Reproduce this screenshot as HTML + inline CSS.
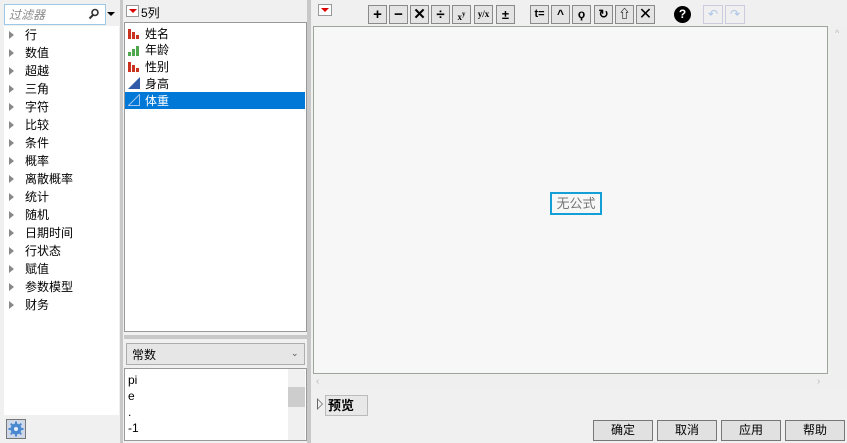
<!DOCTYPE html>
<html><head><meta charset="utf-8"><style>
*{box-sizing:border-box;margin:0;padding:0}
body{width:847px;height:443px;background:#f0f0f0;position:relative;overflow:hidden;font-family:"Liberation Sans","Noto Sans CJK SC",sans-serif;font-size:12px;color:#000}
.a{position:absolute}
.li{position:absolute;left:25px;font-size:12px;line-height:16px}
.tri{position:absolute;left:9px;width:0;height:0;border-left:5px solid #888;border-top:4px solid transparent;border-bottom:4px solid transparent}
.tb{position:absolute;top:5px;width:19px;height:19px;border:1px solid #8a8a8a;background:#e4e4e4;font-weight:bold;text-align:center;line-height:17px;font-size:15px}
.btn{position:absolute;top:420px;width:60px;height:21px;border:1px solid #777;background:#e1e1e1;text-align:center;line-height:19px;font-size:12px}
</style></head><body>
<!-- left panel -->
<div class="a" style="left:4px;top:4px;width:102px;height:21px;border:1px solid #9cc9e6;background:#fff"></div>
<div class="a" style="left:9px;top:6px;color:#888;font-style:italic;font-size:12px">过滤器</div>
<svg class="a" style="left:88px;top:8px" width="12" height="12"><circle cx="7" cy="4.5" r="3" fill="none" stroke="#333" stroke-width="1.6"/><line x1="5" y1="7" x2="1.5" y2="10.5" stroke="#333" stroke-width="2"/></svg>
<div class="a" style="left:107px;top:12px;border-left:4px solid transparent;border-right:4px solid transparent;border-top:4px solid #000"></div>
<div class="a" style="left:4px;top:26px;width:115px;height:389px;background:#fff"></div>
<div class="a" style="left:120px;top:0;width:3px;height:443px;background:#c8c8c8"></div>
<div id="ll"></div>
<div class="a" style="left:6px;top:419px;width:20px;height:20px;border:1px solid #777;background:#cfd8e8"></div>
<svg class="a" style="left:8px;top:421px" width="16" height="16" viewBox="0 0 16 16"><g fill="#4a88d0"><circle cx="8" cy="8" r="5.5"/><rect x="7" y="0.5" width="2" height="15"/><rect x="0.5" y="7" width="15" height="2"/><rect x="7" y="0.5" width="2" height="15" transform="rotate(45 8 8)"/><rect x="7" y="0.5" width="2" height="15" transform="rotate(-45 8 8)"/></g><circle cx="8" cy="8" r="2" fill="#e8f0fa"/></svg>
<!-- middle panel -->
<div class="a" style="left:126px;top:5px;width:13px;height:12px;border:1px solid #999;background:#fff"></div>
<div class="a" style="left:129px;top:9px;border-left:4px solid transparent;border-right:4px solid transparent;border-top:4px solid #d00"></div>
<div class="a" style="left:141px;top:4px">5列</div>
<div class="a" style="left:124px;top:22px;width:183px;height:310px;border:1px solid #999;background:#fff"></div>
<svg class="a" style="left:128px;top:27px" width="12" height="12"><rect x="0" y="2" width="3" height="10" fill="#c8321e"/><rect x="4" y="5" width="3" height="7" fill="#c8321e"/><rect x="8" y="8" width="3" height="4" fill="#c8321e"/></svg>
<div class="a" style="left:145px;top:25px">姓名</div>
<svg class="a" style="left:128px;top:44px" width="12" height="12"><rect x="0" y="8" width="3" height="4" fill="#4ea84e"/><rect x="4" y="5" width="3" height="7" fill="#4ea84e"/><rect x="8" y="2" width="3" height="10" fill="#4ea84e"/></svg>
<div class="a" style="left:145px;top:41px">年龄</div>
<svg class="a" style="left:128px;top:60px" width="12" height="12"><rect x="0" y="2" width="3" height="10" fill="#c8321e"/><rect x="4" y="5" width="3" height="7" fill="#c8321e"/><rect x="8" y="8" width="3" height="4" fill="#c8321e"/></svg>
<div class="a" style="left:145px;top:58px">性别</div>
<svg class="a" style="left:128px;top:77px" width="12" height="12"><polygon points="0,12 12,0 12,12" fill="#2e5aa8"/></svg>
<div class="a" style="left:145px;top:75px">身高</div>
<div class="a" style="left:125px;top:92px;width:180px;height:17px;background:#0078d7"></div>
<svg class="a" style="left:128px;top:94px" width="12" height="12"><polygon points="0.5,11.5 11.5,0.5 11.5,11.5" fill="none" stroke="#a8c4ea" stroke-width="1"/></svg>
<div class="a" style="left:145px;top:92px;color:#fff">体重</div>
<div class="a" style="left:124px;top:335px;width:183px;height:4px;background:#c8c8c8"></div>
<div class="a" style="left:126px;top:343px;width:179px;height:22px;border:1px solid #adadad;background:#e6e6e6"></div>
<div class="a" style="left:132px;top:346px">常数</div>
<div class="a" style="left:291px;top:348px;font-size:9px;color:#555">⌄</div>
<div class="a" style="left:124px;top:368px;width:183px;height:73px;border:1px solid #999;background:#fff"></div>
<div class="a" style="left:288px;top:369px;width:17px;height:71px;background:#f0f0f0"></div>
<div class="a" style="left:288px;top:387px;width:17px;height:20px;background:#cdcdcd"></div>
<div class="a" style="left:128px;top:372px;line-height:16px">pi<br>e<br>.<br>-1</div>
<div class="a" style="left:307px;top:0;width:4px;height:443px;background:#c8c8c8"></div>
<!-- right panel -->
<div class="a" style="left:318px;top:4px;width:14px;height:12px;border:1px solid #999;background:#fff"></div>
<div class="a" style="left:321px;top:8px;border-left:4px solid transparent;border-right:4px solid transparent;border-top:4px solid #d00"></div>
<div class="tb" style="left:368px">+</div>
<div class="tb" style="left:389px">−</div>
<div class="tb" style="left:410px">✕</div>
<div class="tb" style="left:431px">÷</div>
<div class="tb" style="left:452px;font-size:9px;font-family:'Liberation Serif',serif">x<sup style="font-size:7px">y</sup></div>
<div class="tb" style="left:474px;font-size:9px;font-family:'Liberation Serif',serif">y/x</div>
<div class="tb" style="left:496px;font-size:13px">±</div>
<div class="tb" style="left:530px;font-size:11px">t=</div>
<div class="tb" style="left:551px;font-size:12px">^</div>
<div class="tb" style="left:572px;font-size:12px">ϙ</div>
<div class="tb" style="left:594px;font-size:12px">↻</div>
<div class="tb" style="left:615px;font-size:12px">⇧</div>
<div class="tb" style="left:636px;font-weight:normal;font-size:16px">✕</div>
<div class="a" style="left:674px;top:6px;width:17px;height:17px;border-radius:50%;background:#000;color:#fff;font-weight:bold;text-align:center;line-height:17px;font-size:12px">?</div>
<div class="a" style="left:703px;top:5px;width:20px;height:19px;border:1px solid #ccd;color:#aac4e6;text-align:center;line-height:17px">↶</div>
<div class="a" style="left:725px;top:5px;width:20px;height:19px;border:1px solid #ccd;color:#aac4e6;text-align:center;line-height:17px">↷</div>
<div class="a" style="left:313px;top:26px;width:515px;height:348px;border:1px solid #9ea59a;background:#f7f7f7"></div>
<div class="a" style="left:550px;top:192px;width:52px;height:23px;border:2px solid #14a0d6;color:#777;text-align:center;line-height:19px;font-size:13px">无公式</div>
<div class="a" style="left:829px;top:26px;width:18px;height:348px;background:#efefef"></div>
<div class="a" style="left:313px;top:375px;width:534px;height:15px;background:#efefef"></div>
<div class="a" style="left:835px;top:28px;font-size:9px;color:#bbb">^</div>
<div class="a" style="left:316px;top:376px;font-size:10px;color:#bbb">‹</div>
<div class="a" style="left:817px;top:376px;font-size:10px;color:#bbb">›</div>
<div class="a" style="left:317px;top:398px;border-left:6px solid #666;border-top:6px solid transparent;border-bottom:6px solid transparent"></div>
<div class="a" style="left:318px;top:400px;border-left:4px solid #f0f0f0;border-top:4px solid transparent;border-bottom:4px solid transparent"></div>
<div class="a" style="left:325px;top:395px;width:43px;height:21px;border:1px solid #bbb;background:#e8e8e8;font-weight:bold;line-height:19px;padding-left:2px;font-size:13px">预览</div>
<div class="btn" style="left:593px">确定</div>
<div class="btn" style="left:657px">取消</div>
<div class="btn" style="left:721px">应用</div>
<div class="btn" style="left:785px">帮助</div>
<script>
var n=["行","数值","超越","三角","字符","比较","条件","概率","离散概率","统计","随机","日期时间","行状态","赋值","参数模型","财务"],h="";
n.forEach(function(t,i){var y=27+i*18;h+='<div class="tri" style="top:'+(y+4)+'px"></div><div class="li" style="top:'+y+'px">'+t+'</div>';});
document.getElementById("ll").innerHTML=h;
</script>
</body></html>
